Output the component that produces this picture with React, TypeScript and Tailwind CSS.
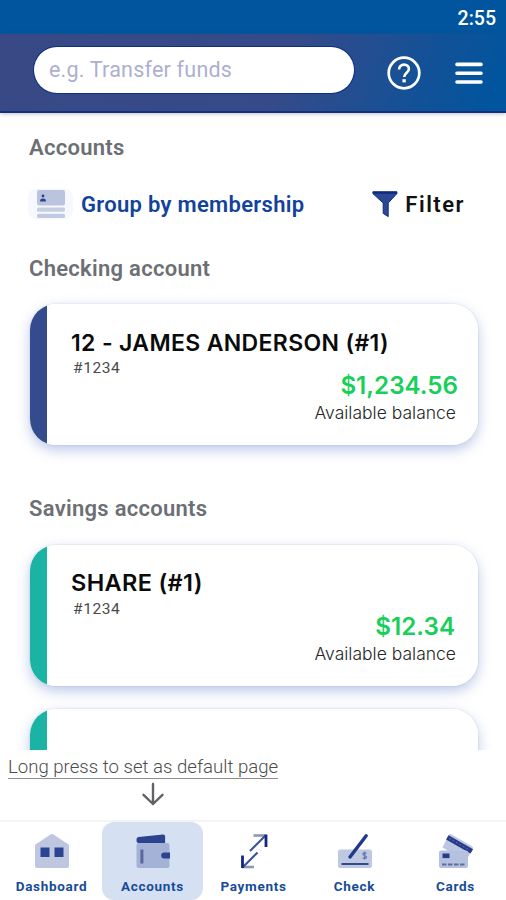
import type { ReactNode } from "react";
import clsx from "clsx";

type Account = {
  name: string;
  number: string;
  balance: string;
  nameClass: string;
  balanceClass: string;
};

const CHECKING: Account = {
  name: "12 - JAMES ANDERSON (#1)",
  number: "#1234",
  balance: "$1,234.56",
  nameClass: "text-[23px] tracking-[0.35px]",
  balanceClass: "mr-[-2px]",
};

const SHARE: Account = {
  name: "SHARE (#1)",
  number: "#1234",
  balance: "$12.34",
  nameClass: "mt-[-1px] mb-[1px] text-[23.5px] tracking-[0.35px]",
  balanceClass: "mr-[1px]",
};

function HelpIcon() {
  return (
    <svg width="34" height="34" viewBox="0 0 34 34" fill="none" stroke="white">
      <circle cx="17" cy="17" r="15.3" strokeWidth="2.7" />
      <path
        d="M12.1 13.4c0-3 2.1-4.8 4.9-4.8s4.9 1.8 4.9 4.4c0 3.6-4.7 3.9-4.7 8"
        strokeWidth="2.6"
      />
      <path d="M17.1 23.2v3.2" strokeWidth="3.3" />
    </svg>
  );
}

function MenuIcon() {
  return (
    <svg width="28" height="24" viewBox="0 0 28 24" stroke="white">
      <path d="M2 3.4h24M2 12.2h24M2 21h24" strokeWidth="3.6" strokeLinecap="round" />
    </svg>
  );
}

function MembershipIcon() {
  return (
    <svg width="46" height="32" viewBox="0 0 46 32">
      <rect x="0" y="0.5" width="45" height="31" rx="9" fill="#f6f8fd" />
      <rect x="9" y="2" width="28" height="15.5" rx="2" fill="#bac4df" />
      <rect x="9" y="19.5" width="28" height="4.2" rx="1.5" fill="#c6cee4" />
      <rect x="9" y="25.8" width="28" height="4.2" rx="1.5" fill="#c1cae2" />
      <circle cx="15" cy="8" r="1.4" fill="#2a4290" />
      <path d="M12.2 13.6v-1.2q0-2 2.8-2t2.8 2v1.2z" fill="#2a4290" />
    </svg>
  );
}

function FilterIcon() {
  return (
    <svg width="26" height="28" viewBox="0 0 26 28">
      <path
        d="M.9 1.8h24v1.8L16.2 13v13.6l-5-3.2V13L.9 3.6z"
        fill="#2c4794"
        stroke="#0d2b82"
        strokeWidth="1"
      />
      <path d="M1 2.8h24" stroke="#0d2b82" strokeWidth="2" />
    </svg>
  );
}

function DashboardIcon() {
  return (
    <svg width="36" height="36" viewBox="0 0 36 36">
      <path
        d="M1.5 11.6 16.5 1.5q1.5-.9 3 0l15 10.100q.5.4.5 1.200V33a2 2 0 0 1-2 2H3a2 2 0 0 1-2-2V12.800q0-.8.5-1.200z"
        fill="#bec6e0"
      />
      <path d="M6.500 14.500h9v9.500h-9zM20.500 14.500h9v9.500h-9z" fill="#2c4592" />
    </svg>
  );
}

function AccountsIcon() {
  return (
    <svg width="36" height="36" viewBox="0 0 36 36">
      <rect x="1.5" y="10" width="33" height="25" rx="2" fill="#a4b2d8" />
      <path d="M1.5 6q.1-1.800 2-2.100L28 1.600q2-.1 2.100 1.500V10H3.500q-2-.2-2-2z" fill="#2c4490" />
      <path d="M6.9 16.500v14" stroke="#56689f" strokeWidth="3" />
      <path d="M35 19.500h-5.800a3 3 0 0 0 0 6H35z" fill="#2c4490" />
    </svg>
  );
}

function PaymentsIcon() {
  return (
    <svg width="36" height="36" viewBox="0 0 36 36" fill="none">
      <path d="M17.500 2.500h12" stroke="#8f97b5" strokeWidth="2.600" />
      <path d="M6 34h12" stroke="#8f97b5" strokeWidth="2.600" />
      <path d="M14 18 29.500 2.500M21.500 19.500 7 34" stroke="#3f5596" strokeWidth="2.200" />
      <path d="M30 1.500v12.500M6.500 22.500V35" stroke="#122783" strokeWidth="2.800" />
    </svg>
  );
}

function CheckIcon() {
  return (
    <svg width="36" height="36" viewBox="0 0 36 36">
      <rect x="1" y="16.500" width="34" height="18.500" rx="2" fill="#bec8e1" />
      <path d="M4.500 31h27" stroke="#33498f" strokeWidth="2" />
      <path d="M13 24 29.200 2.800" stroke="#20378b" strokeWidth="3.400" strokeLinecap="round" />
      <path
        d="M29.500 20.300q-3.600-1.200-3.600.8c0 1.800 3.600 1.100 3.600 3 0 1.800-2.600 1.600-3.800.8M27.700 18.600v8"
        stroke="#6b7baf"
        strokeWidth="1.300"
        fill="none"
      />
    </svg>
  );
}

function CardsIcon() {
  return (
    <svg width="36" height="36" viewBox="0 0 36 36">
      <path
        d="M10.600 2.100q.9-1.600 2.500-.8L34 13.200q1.500 1 .7 2.500L28 28 4.500 14.500z"
        fill="#bdc7e2"
      />
      <path d="m9.300 4.300 24.500 14" stroke="#263c8b" strokeWidth="5" />
      <path d="m11 5.200 21 12" stroke="#60719f" strokeWidth="1" strokeDasharray="2 2" />
      <rect x="1" y="17.500" width="29" height="17.500" rx="2" fill="#b5c1df" />
      <rect x="4.500" y="20.500" width="7" height="4.600" fill="#253c8b" />
      <path d="M4 31.500h23" stroke="#5e6f9f" strokeWidth="1.800" strokeDasharray="4.500 1.500" />
    </svg>
  );
}

function SectionTitle({ children }: { children: ReactNode }) {
  return (
    <h2 className="text-[22px] leading-6 font-semibold tracking-[0.28px] text-[#6c6f73]">
      {children}
    </h2>
  );
}

function AccountCard({ account, accent }: { account?: Account; accent: string }) {
  return (
    <div className="rounded-[26px] shadow-[0_5px_13px_rgba(70,105,190,0.36),0_0_1px_1px_rgba(120,130,150,0.09)]">
      <article className="flex h-[141px] overflow-hidden rounded-[26px] bg-white">
        <div className={clsx("w-[17px] shrink-0", accent)} />
        {account && (
          <div className="flex flex-1 flex-col pt-6 pr-[22px] pl-6 font-['Inter',sans-serif]">
            <h3
              className={clsx(
                "leading-[30px] font-semibold whitespace-nowrap text-[#0b0b0b]",
                account.nameClass,
              )}
            >
              {account.name}
            </h3>
            <p className="ml-[2px] text-[15.5px] leading-5 tracking-[0.6px] text-[#48494b] font-['Roboto',sans-serif]">
              {account.number}
            </p>
            <p
              className={clsx(
                "mt-[-6px] text-right text-[24.2px] leading-[28px] font-semibold text-[#18cf5a]",
                account.balanceClass,
              )}
            >
              {account.balance}
            </p>
            <p className="text-right text-[17.5px] leading-[26px] font-light text-[#252628]">
              Available balance
            </p>
          </div>
        )}
      </article>
    </div>
  );
}

const TABS = [
  { label: "Dashboard", icon: <DashboardIcon /> },
  { label: "Accounts", icon: <AccountsIcon />, active: true },
  { label: "Payments", icon: <PaymentsIcon /> },
  { label: "Check", icon: <CheckIcon /> },
  { label: "Cards", icon: <CardsIcon /> },
];

function TabBar() {
  return (
    <nav className="grid h-20 grid-cols-5 border-t-2 border-[#f4f4f5] pl-[1px]">
      {TABS.map((tab) => (
        <a
          key={tab.label}
          className={clsx(
            "flex flex-col items-center rounded-xl pt-[11px]",
            tab.active && "bg-[#d5e1f2]",
          )}
        >
          {tab.icon}
          <span className="mt-[7px] text-[13.5px] leading-5 font-bold tracking-[0.7px] text-[#174b98]">
            {tab.label}
          </span>
        </a>
      ))}
    </nav>
  );
}

export default function App() {
  return (
    <div className="flex h-[900px] w-[506px] flex-col overflow-hidden bg-white font-['Roboto',sans-serif]">
      <div className="flex h-[34px] shrink-0 items-center justify-end bg-[#00559e] pt-[4px] pr-[10px] text-[19.5px] font-medium text-white">
        2:55
      </div>

      <header className="z-10 flex h-[79px] shrink-0 items-center border-b-2 border-[#12307f] bg-linear-[110deg,#384985_0%,#364a89_55%,#00559e_97%] pr-[23px] pl-[34px] shadow-[0_1px_4px_rgba(90,70,90,0.35)]">
        <input
          type="text"
          placeholder="e.g. Transfer funds"
          className="mt-[-5px] h-[46px] w-80 rounded-full bg-white px-[15px] pb-[2px] text-[21.5px] tracking-[0.22px] ring-1 ring-[#102f83] outline-none placeholder:text-[#adafd0]"
        />
        <div className="ml-[32.5px]">
          <HelpIcon />
        </div>
        <div className="ml-auto">
          <MenuIcon />
        </div>
      </header>

      <main className="h-[637px] shrink-0 overflow-hidden px-7 pt-[23px]">
        <div className="ml-[1px]">
          <SectionTitle>Accounts</SectionTitle>
        </div>
        <div className="mt-7 flex h-8 items-center">
          <MembershipIcon />
          <span className="ml-[7px] text-[22px] font-semibold tracking-[0.3px] text-[#12439b]">
            Group by membership
          </span>
          <div className="mr-[13px] ml-auto flex items-center gap-[7px]">
            <FilterIcon />
            <span className="text-[22px] font-semibold tracking-[1.5px] text-[#111]">Filter</span>
          </div>
        </div>

        <section className="mt-[37px] ml-[1px]">
          <SectionTitle>Checking account</SectionTitle>
          <div className="mt-[23px] ml-[1px] w-[448px]">
            <AccountCard account={CHECKING} accent="bg-[#344b8e]" />
          </div>
        </section>

        <section className="mt-[52px] ml-[1px]">
          <SectionTitle>Savings accounts</SectionTitle>
          <div className="mt-6 ml-[1px] flex w-[448px] flex-col gap-[23px]">
            <AccountCard account={SHARE} accent="bg-[#1bb3a4]" />
            <AccountCard accent="bg-[#1bb3a4]" />
          </div>
        </section>
      </main>

      <div className="h-[70px] shrink-0 pt-[6px] pl-2">
        <p className="h-[23px] w-[270px] border-b border-[#8d8d8d] text-[18.6px] leading-[23px] font-light whitespace-nowrap text-[#4c4c4c]">
          Long press to set as default page
        </p>
        <svg
          className="mt-[3px] ml-[133px]"
          width="24"
          height="24"
          viewBox="0 0 24 24"
          fill="none"
          stroke="#606266"
          strokeWidth="2.4"
          strokeLinecap="round"
          strokeLinejoin="round"
        >
          <path d="M12 2v20M2.500 12.800 12 22l9.500-9.200" />
        </svg>
      </div>

      <TabBar />
    </div>
  );
}
